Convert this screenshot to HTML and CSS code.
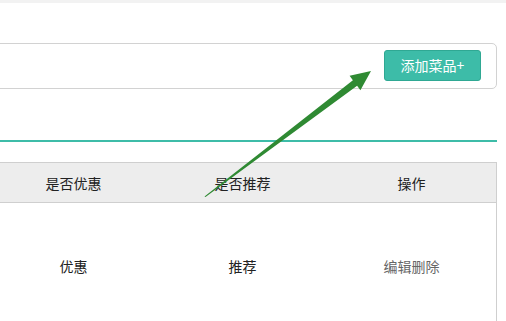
FILE: index.html
```html
<!DOCTYPE html>
<html>
<head>
<meta charset="utf-8">
<link rel="stylesheet" href="styles.css">
</head>
<body>
<div class="topbar"></div>
<div class="content">
  <div class="toolbar">
    <button class="add-btn">添加菜品+</button>
  </div>
  <div class="divider"></div>
  <div class="table">
    <div class="row head">
      <div class="cell">是否优惠</div>
      <div class="cell">是否推荐</div>
      <div class="cell">操作</div>
    </div>
    <div class="row body">
      <div class="cell">优惠</div>
      <div class="cell">推荐</div>
      <div class="cell ops">编辑删除</div>
    </div>
  </div>
</div>
<svg class="arrow" width="506" height="321" viewBox="0 0 506 321">
  <polygon points="204.5,196.5 352.9,80.2 349.6,75.8 371,71 360.4,90.2 357.1,85.8 205.5,197" fill="#2f8a33"/>
</svg>
</body>
</html>
```
FILE: styles.css
```css
html, body {
  margin: 0;
  padding: 0;
  background: #ffffff;
  overflow: hidden;
  font-family: "Noto Sans CJK SC", "Microsoft YaHei", sans-serif;
  font-size: 14px;
  color: #222222;
}
.topbar {
  height: 3px;
  background: #f2f2f2;
}
.content {
  margin-left: -20px;
  width: 517px;
}
.toolbar {
  margin-top: 40px;
  height: 44px;
  border: 1px solid #d2d2d2;
  border-radius: 5px;
  display: flex;
  justify-content: flex-end;
  align-items: flex-start;
  padding-right: 15px;
  box-sizing: content-box;
}
.add-btn {
  margin-top: 6px;
  width: 97px;
  height: 31px;
  background: #3dbca8;
  border: 1px solid #2fa893;
  border-radius: 3px;
  color: #ffffff;
  font-family: "Noto Sans CJK SC", sans-serif;
  font-size: 14px;
  padding: 0;
  line-height: 29px;
}
.divider {
  margin-top: 51px;
  height: 2px;
  background: #3dbca8;
}
.table {
  margin-top: 20px;
  margin-left: 9px;
  width: 507px;
  border-top: 1px solid #cfcfcf;
  border-right: 1px solid #cfcfcf;
}
.row {
  display: grid;
  grid-template-columns: 169px 169px 169px;
}
.row.head {
  height: 39px;
  background: #ededed;
  border-bottom: 1px solid #cfcfcf;
}
.row.body {
  height: 126px;
}
.cell {
  display: flex;
  align-items: center;
  justify-content: center;
}
.ops {
  color: #666666;
}
.arrow {
  position: absolute;
  left: 0;
  top: 0;
  pointer-events: none;
}
```
